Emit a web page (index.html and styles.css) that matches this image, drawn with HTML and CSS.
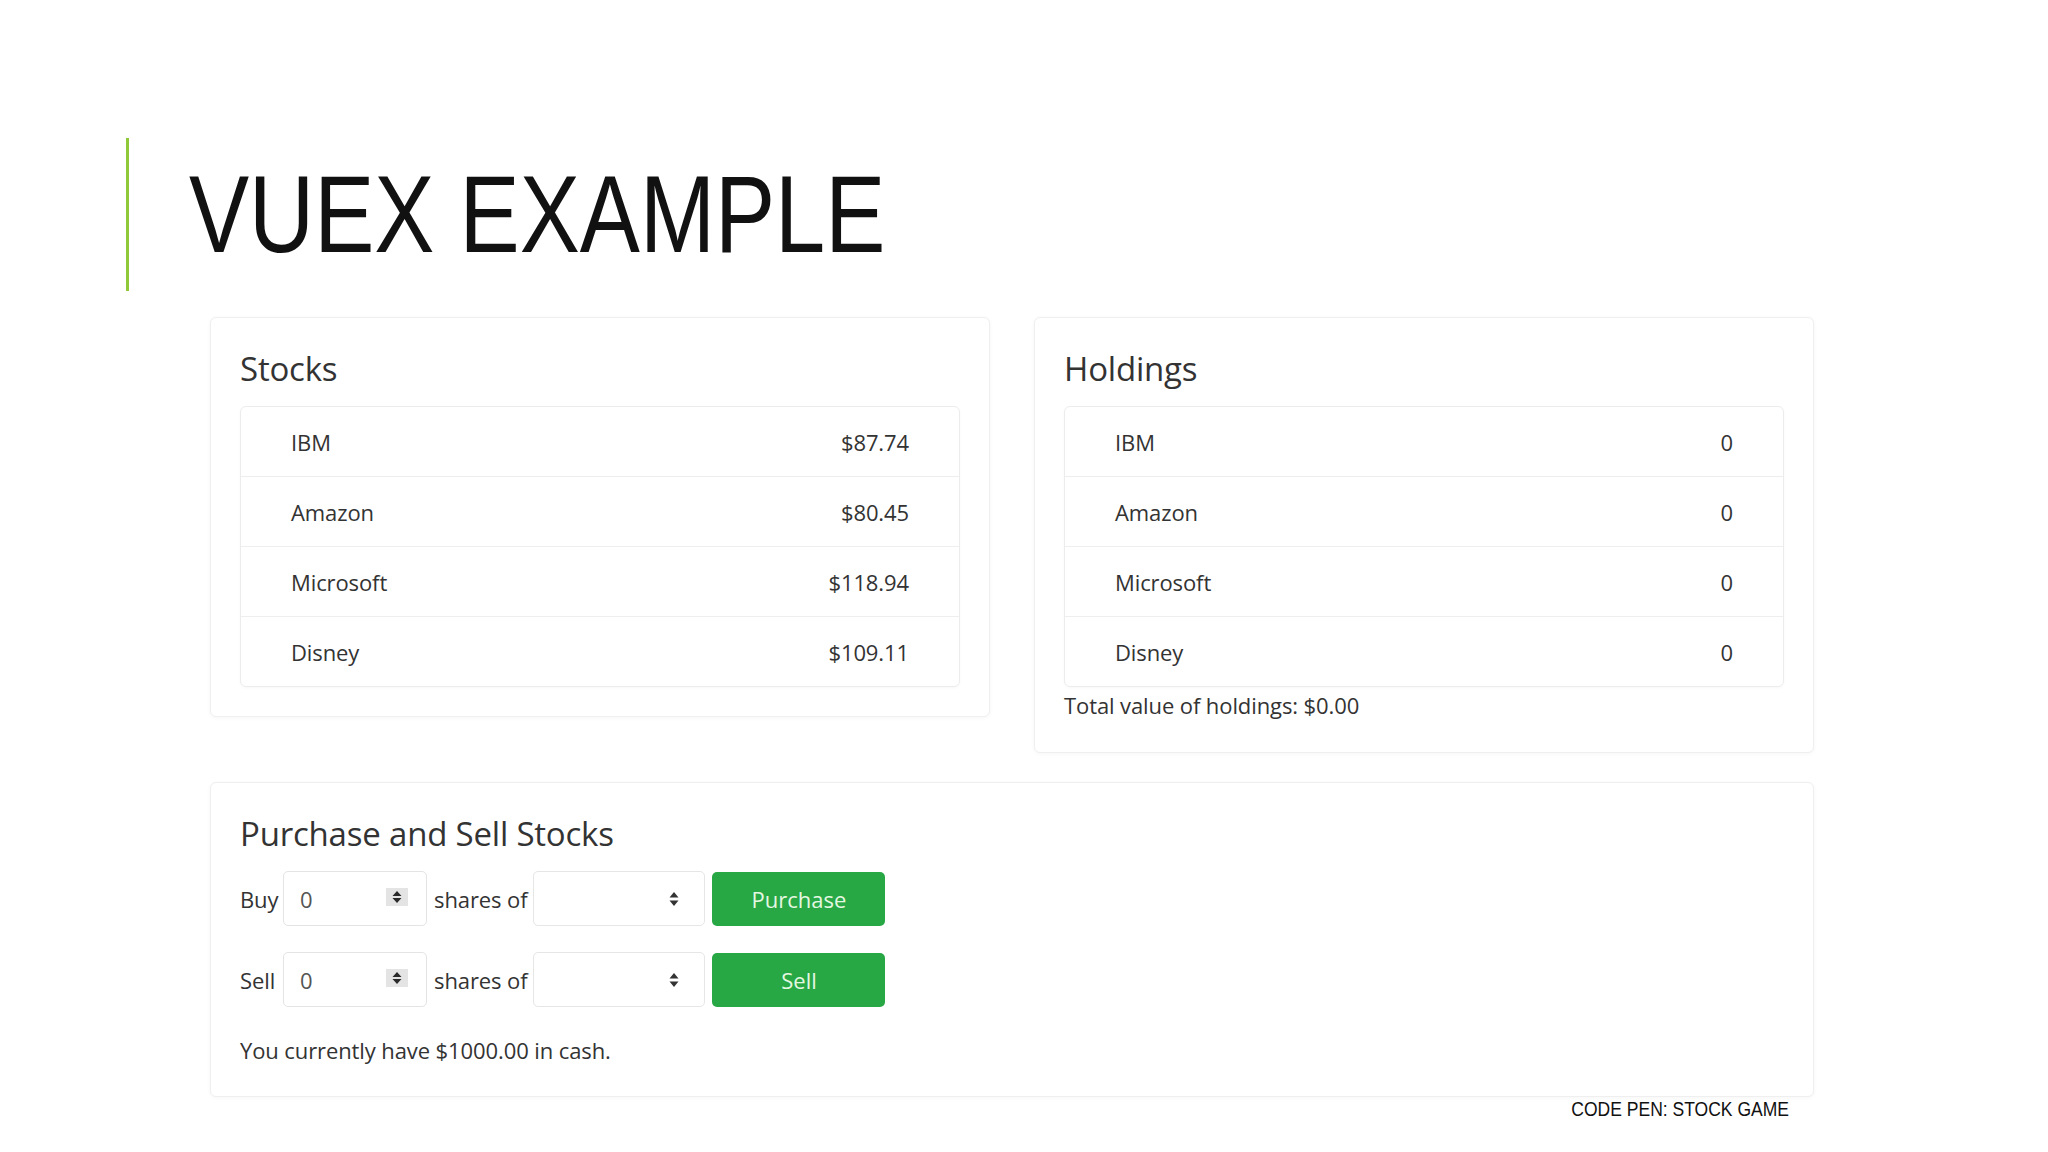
FILE: index.html
```html
<!DOCTYPE html>
<html lang="en">
<head>
<meta charset="utf-8">
<title>Vuex Example</title>
<link rel="stylesheet" href="styles.css">
</head>
<body>
<div class="slide">
  <header class="slide-header">
    <div class="accent-bar"></div>
    <h1 class="slide-title">VUEX EXAMPLE</h1>
  </header>

  <main class="app">
    <div class="top-row">
      <section class="card">
        <h4 class="card-title">Stocks</h4>
        <ul class="list">
          <li class="list-item"><span>IBM</span><span>$87.74</span></li>
          <li class="list-item"><span>Amazon</span><span>$80.45</span></li>
          <li class="list-item"><span>Microsoft</span><span>$118.94</span></li>
          <li class="list-item"><span>Disney</span><span>$109.11</span></li>
        </ul>
      </section>

      <section class="card">
        <h4 class="card-title">Holdings</h4>
        <ul class="list">
          <li class="list-item"><span>IBM</span><span>0</span></li>
          <li class="list-item"><span>Amazon</span><span>0</span></li>
          <li class="list-item"><span>Microsoft</span><span>0</span></li>
          <li class="list-item"><span>Disney</span><span>0</span></li>
        </ul>
        <p class="text">Total value of holdings: $0.00</p>
      </section>
    </div>

    <section class="card trade-card">
      <h4 class="card-title">Purchase and Sell Stocks</h4>
      <div class="trade-row">
        <span class="trade-label">Buy</span>
        <div class="num-input">
          <span>0</span>
          <svg class="spinner" width="22" height="18" viewBox="0 0 22 18"><rect x="0" y="0" width="22" height="18" fill="#e4e4e4"/><path d="M6.5 8 L11 3 L15.5 8 Z M6.5 10 L11 15 L15.5 10 Z" fill="#2a2a2a"/></svg>
        </div>
        <span class="trade-text">shares of</span>
        <div class="select-box">
          <svg class="select-arrow" width="12" height="18" viewBox="0 0 12 18"><path d="M1.5 7.5 L6 2 L10.5 7.5 Z M1.5 10.5 L6 16 L10.5 10.5 Z" fill="#333"/></svg>
        </div>
        <button class="btn">Purchase</button>
      </div>
      <div class="trade-row">
        <span class="trade-label">Sell</span>
        <div class="num-input">
          <span>0</span>
          <svg class="spinner" width="22" height="18" viewBox="0 0 22 18"><rect x="0" y="0" width="22" height="18" fill="#e4e4e4"/><path d="M6.5 8 L11 3 L15.5 8 Z M6.5 10 L11 15 L15.5 10 Z" fill="#2a2a2a"/></svg>
        </div>
        <span class="trade-text">shares of</span>
        <div class="select-box">
          <svg class="select-arrow" width="12" height="18" viewBox="0 0 12 18"><path d="M1.5 7.5 L6 2 L10.5 7.5 Z M1.5 10.5 L6 16 L10.5 10.5 Z" fill="#333"/></svg>
        </div>
        <button class="btn">Sell</button>
      </div>
      <p class="text cash">You currently have $1000.00 in cash.</p>
    </section>

    <div class="credit"><span class="credit-text">CODE PEN: STOCK GAME</span></div>
  </main>
</div>
</body>
</html>
```

FILE: styles.css
```css
html, body {
  margin: 0;
  padding: 0;
  background: #ffffff;
}

.slide {
  width: 2048px;
  height: 1152px;
  overflow: hidden;
  box-sizing: border-box;
  padding-top: 138px;
  font-family: "Open Sans", "Noto Sans", sans-serif;
  color: #333333;
}

.slide-header {
  display: flex;
  align-items: center;
  padding-left: 126px;
  height: 153px;
}

.accent-bar {
  width: 3px;
  height: 153px;
  background: #8fc93a;
  flex: none;
}

.slide-title {
  margin: 0 0 0 60px;
  font-family: "Liberation Sans", Arial, sans-serif;
  font-weight: 400;
  font-size: 109px;
  line-height: 1;
  color: #111111;
  transform: scaleX(0.827);
  transform-origin: left center;
  white-space: nowrap;
}

.app {
  width: 1604px;
  margin: 26px 0 0 210px;
}

.top-row {
  display: grid;
  grid-template-columns: 780px 780px;
  column-gap: 44px;
  align-items: start;
}

.card {
  box-sizing: border-box;
  background: #ffffff;
  border: 1px solid #efefef;
  border-radius: 6px;
  box-shadow: 0 1px 4px rgba(0, 0, 0, 0.04);
  padding: 29px;
}

.card-title {
  margin: 0 0 16px 0;
  font-size: 33px;
  line-height: 43px;
  font-weight: 400;
  color: #333333;
  letter-spacing: -0.2px;
}

.list {
  list-style: none;
  margin: 0;
  padding: 0;
  border: 1px solid #ececec;
  border-radius: 6px;
  box-shadow: 0 1px 3px rgba(0, 0, 0, 0.03);
}

.list-item {
  display: flex;
  justify-content: space-between;
  align-items: center;
  height: 69px;
  padding: 0 50px;
  font-size: 22px;
  letter-spacing: -0.1px;
  color: #333333;
}

.list-item + .list-item {
  border-top: 1px solid #eeeeee;
}

.text {
  margin: 0;
  font-size: 22px;
  line-height: 36px;
  letter-spacing: -0.1px;
  color: #333333;
}

.trade-card {
  margin-top: 29px;
  padding-bottom: 28px;
}

.trade-card .card-title {
  margin-bottom: 15px;
}

.trade-row {
  display: flex;
  align-items: center;
  height: 57px;
  margin-bottom: 24px;
  font-size: 22px;
  letter-spacing: -0.1px;
}

.trade-label {
  width: 37px;
  margin-right: 6px;
}

.num-input {
  box-sizing: border-box;
  width: 144px;
  height: 55px;
  border: 1px solid #e4e4e4;
  border-radius: 5px;
  display: flex;
  align-items: center;
  justify-content: space-between;
  padding: 0 18px 0 16px;
  color: #555555;
}

.spinner {
  display: block;
  margin-top: -4px;
}

.trade-text {
  margin: 0 6px 0 7px;
}

.select-box {
  box-sizing: border-box;
  width: 172px;
  height: 55px;
  border: 1px solid #e6e6e6;
  border-radius: 5px;
  display: flex;
  align-items: center;
  justify-content: flex-end;
  padding-right: 24px;
}

.select-arrow {
  display: block;
}

.btn {
  box-sizing: border-box;
  width: 173px;
  height: 54px;
  margin-left: 7px;
  border: none;
  border-radius: 5px;
  background: #28a745;
  color: #e4f7e0;
  font-family: "Open Sans", "Noto Sans", sans-serif;
  font-size: 22px;
  padding: 0;
}

.cash {
  margin-top: 0;
}

.credit {
  margin: 0 25px 0 0;
  text-align: right;
  line-height: 24px;
}

.credit-text {
  display: inline-block;
  font-family: "Liberation Sans", Arial, sans-serif;
  font-size: 21px;
  color: #111111;
  transform: scaleX(0.834);
  transform-origin: right center;
  white-space: nowrap;
}
```
